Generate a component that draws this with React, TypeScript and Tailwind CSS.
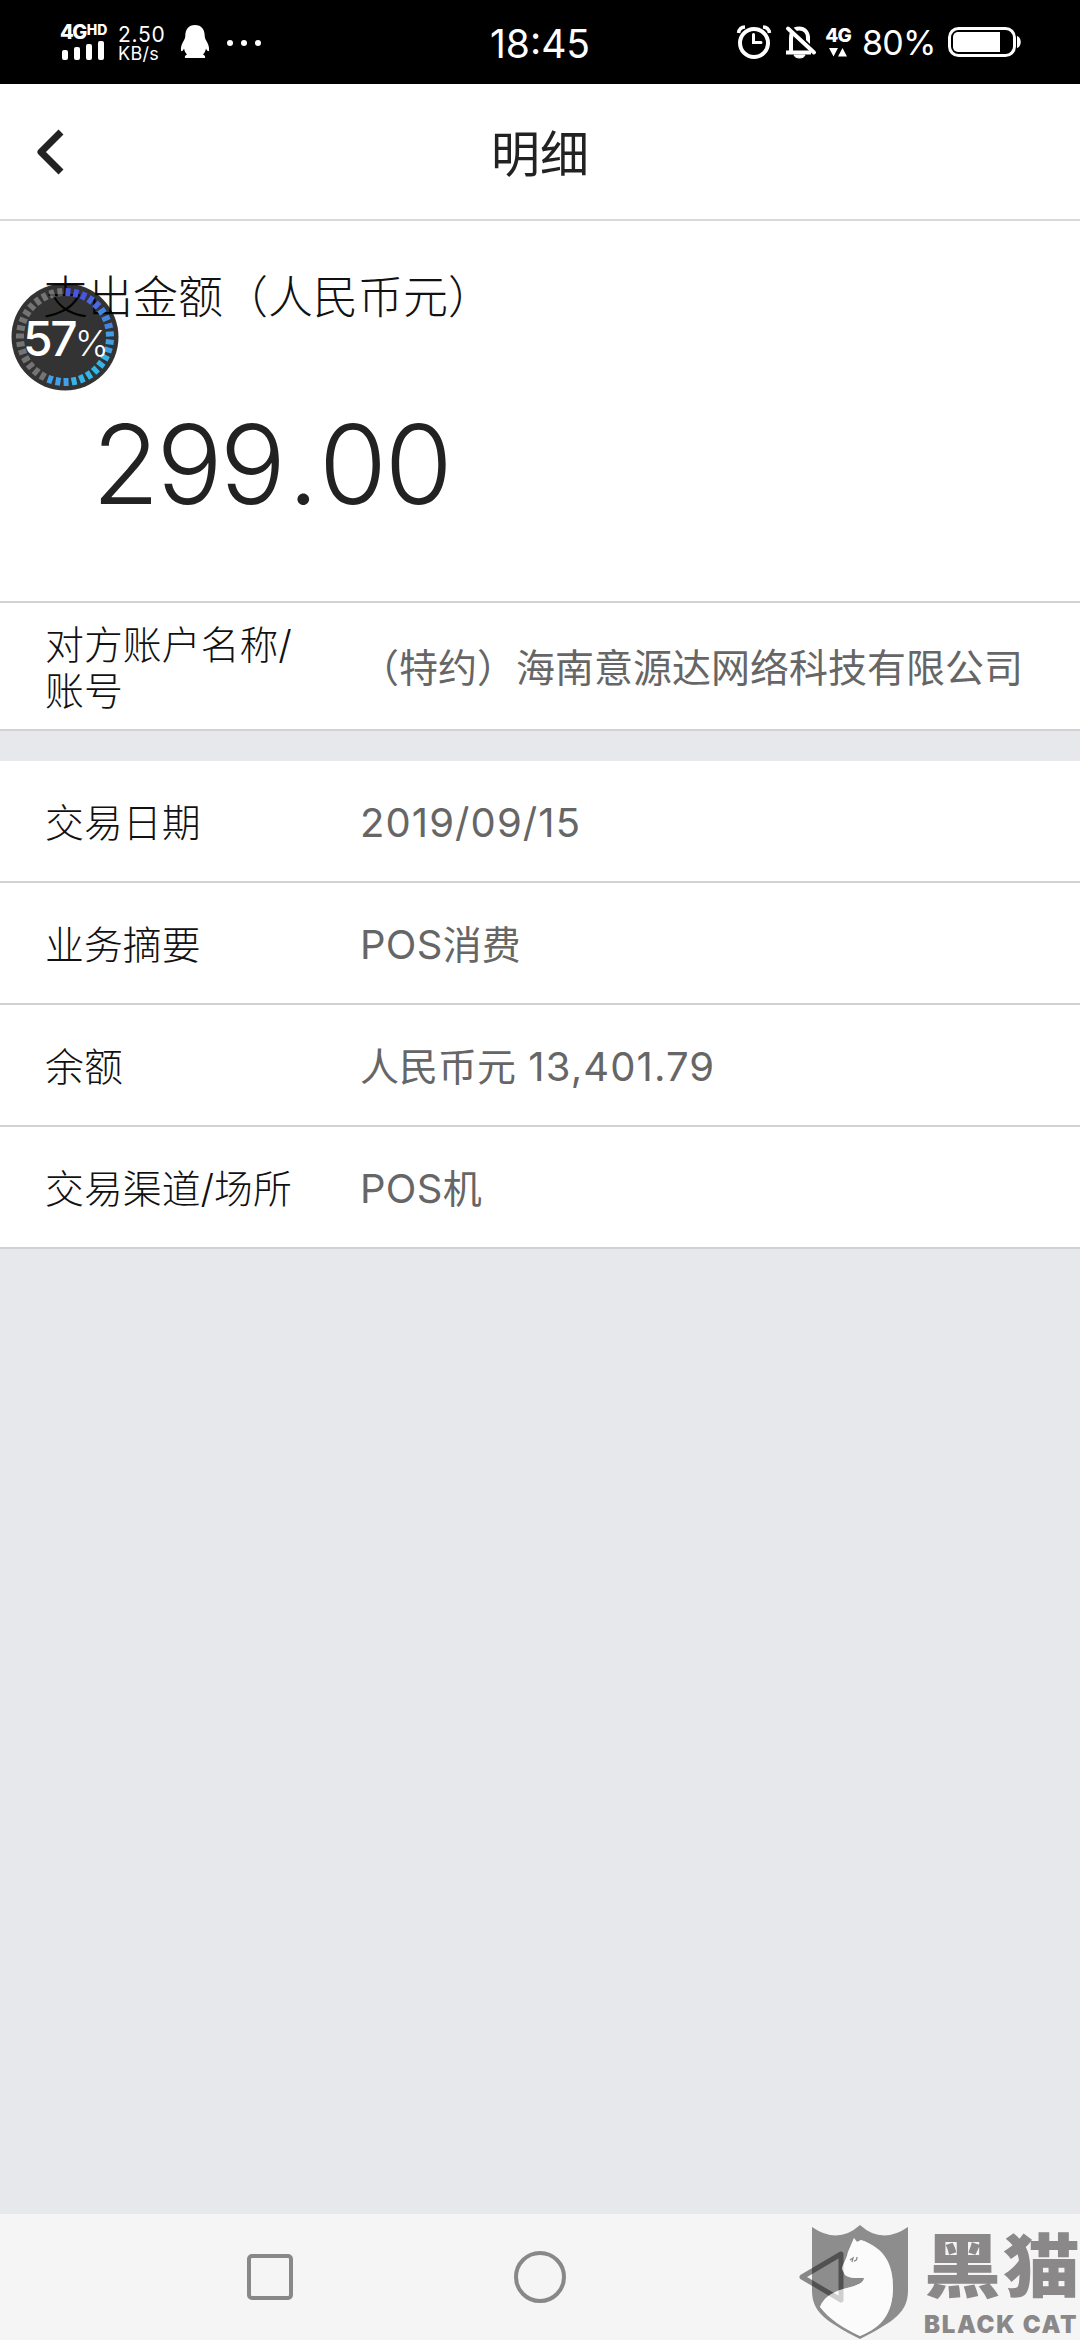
import React from 'react';
import { clsx } from 'clsx';

interface DetailRow {
  label: string;
  value: string;
}

const ROWS: DetailRow[] = [
  { label: '交易日期', value: '2019/09/15' },
  { label: '业务摘要', value: 'POS消费' },
  { label: '余额', value: '人民币元 13,401.79' },
  { label: '交易渠道/场所', value: 'POS机' },
];

const TICK_COUNT = 35;
const PERCENT = 57;
const ACTIVE_TICKS = Math.round((TICK_COUNT * PERCENT) / 100);

const tickColor = (i: number) => {
  if (i >= ACTIVE_TICKS) return 'rgba(255,255,255,0.32)';
  if (i < 3) return '#4a55e0';
  if (i < 5) return '#4a68e6';
  if (i < 8) return '#4385e0';
  if (i < 11) return '#3f9fe6';
  if (i < 17) return '#35b4ea';
  return '#429fe8';
};

const StatusBar: React.FC = () => (
  <header className="relative flex h-[84px] items-center bg-black pl-[60px] pr-[58px] text-white">
    {/* Signal */}
    <div className="flex w-[46px] flex-col">
      <div className="flex h-[16px] items-start leading-none">
        <span className="text-[20px] font-extrabold leading-[16px] tracking-[-1.5px]">4G</span>
        <span className="ml-[1px] text-[14px] font-extrabold leading-[11px]">HD</span>
      </div>
      <div className="flex h-[20px] items-end gap-[6px] pl-[2px]">
        <div className="h-[10px] w-[6px] rounded-[2px] bg-white" />
        <div className="h-[13px] w-[6px] rounded-[2px] bg-white" />
        <div className="h-[16px] w-[6px] rounded-[2px] bg-white" />
        <div className="h-[19px] w-[6px] rounded-[2px] bg-white" />
      </div>
    </div>
    <div className="ml-[12px] mt-[3px] w-[50px] whitespace-nowrap">
      <div className="text-[21px] leading-[19px] tracking-[0.7px]">2.50</div>
      <div className="text-[18px] leading-[19px] tracking-[0.3px]">KB/s</div>
    </div>
    {/* Penguin */}
    <svg className="ml-[12px] h-[34px] w-[30px]" viewBox="0 0 30 34" fill="white">
      <path d="M15 0C8.500 0 5.500 4.500 5.300 10.500C5.300 13 4.500 14.500 3 17C1.300 20 .6 23 1 25.500C1.300 27 3 26 4 23.500C4.500 26 5.500 28 7 29.500C5 30.300 4.600 31.300 5 33H25C25.400 31.300 25 30.300 23 29.500C24.500 28 25.500 26 26 23.500C27 26 28.700 27 29 25.500C29.400 23 28.700 20 27 17C25.500 14.500 24.700 13 24.700 10.500C24.500 4.500 21.500 0 15 0Z" />
    </svg>
    <div className="ml-[17px] mt-[2px] flex gap-[8px]">
      <div className="h-[6px] w-[6px] rounded-full bg-white" />
      <div className="h-[6px] w-[6px] rounded-full bg-white" />
      <div className="h-[6px] w-[6px] rounded-full bg-white" />
    </div>
    <div className="absolute inset-x-0 top-[23px] text-center text-[39px] leading-[42px]">18:45</div>

    <div className="ml-auto flex items-center">
      {/* Alarm */}
      <svg className="h-[36px] w-[36px]" viewBox="0 0 36 36" fill="none" stroke="white">
        <circle cx="18" cy="19" r="14" strokeWidth="4" />
        <path d="M17.500 10.500V18.500H25" strokeWidth="3" strokeLinecap="round" />
        <path d="M2.500 9C3 5.500 5.500 3.200 9 3M27 3C30.500 3.200 33 5.500 33.500 9" strokeWidth="3.500" />
      </svg>
      {/* Muted bell */}
      <svg className="ml-[12px] h-[36px] w-[34px]" viewBox="0 0 34 36" fill="none" stroke="white">
        <path d="M2 28.500H27M7 28V15C7 7.500 10.500 4.500 15 4.500C20.500 4.500 24 8.500 24 14V22" strokeWidth="4" />
        <path d="M10 31C11 35 20 35 21 31Z" fill="white" strokeWidth="1" />
        <path d="M6 3L32 29" stroke="black" strokeWidth="4" />
        <path d="M4 4.500L30 28.500" strokeWidth="4" strokeLinecap="round" />
      </svg>
      <div className="ml-[6px] flex w-[28px] flex-col items-center">
        <span className="text-[19px] font-extrabold leading-[18px] tracking-[-1px]">4G</span>
        <svg className="mt-[2px] h-[10px] w-[18px]" viewBox="0 0 18 10" fill="white">
          <path d="M0 1H9L4.500 9.500ZM9 9.500H18L13.500 1Z" />
        </svg>
      </div>
      <span className="ml-[10px] mt-[2px] w-[74px] whitespace-nowrap text-[34px] font-normal leading-[42px] tracking-[-0.8px]">80%</span>
      <svg className="ml-[12px] h-[32px] w-[74px]" viewBox="0 0 74 32">
        <rect x="1.500" y="2.500" width="65" height="27" rx="9" fill="none" stroke="white" strokeWidth="3" />
        <rect x="5" y="6" width="47" height="20" rx="5" fill="white" />
        <rect x="46" y="6" width="6" height="20" fill="white" />
        <path d="M69 10C74 11 74 21 69 22Z" fill="white" />
      </svg>
    </div>
  </header>
);

const FloatingPercent: React.FC = () => (
  <div className="absolute left-[11px] top-[283px] h-[108px] w-[108px]">
    <svg className="absolute inset-0 h-full w-full" viewBox="0 0 108 108">
      <circle cx="54" cy="54" r="53.500" fill="rgba(0,0,0,0.8)" />
      {Array.from({ length: TICK_COUNT }, (_, i) => (
        <rect
          key={i}
          x="51.500"
          y="5"
          width="5"
          height="8"
          fill={tickColor(i)}
          transform={`rotate(${3.8 + (i * 360) / TICK_COUNT} 54 54)`}
        />
      ))}
    </svg>
    <div className="absolute left-[12px] top-[27px] flex items-baseline whitespace-nowrap leading-[58px] text-white">
      <span className="text-[48px] font-medium tracking-[-2.500px]">57</span>
      <span className="text-[36px] font-light">%</span>
    </div>
  </div>
);

// Latin runs are set slightly looser than the Chinese text around them
const MixedText: React.FC<{ text: string }> = ({ text }) => (
  <>
    {text.split(/([\x20-\x7e]+)/).map((part, i) =>
      i % 2 === 1 ? (
        <span key={i} className={/\d/.test(part) ? 'text-[40px] tracking-[1.1px]' : 'text-[40px] tracking-[0.3px]'}>
          {part}
        </span>
      ) : (
        part
      )
    )}
  </>
);

const Row: React.FC<DetailRow & { tall?: boolean }> = ({ label, value, tall }) => (
  <div className={clsx('flex items-center border-b-2 border-[#d2d2d4] bg-white pl-[45px] pt-[4px]', tall ? 'h-[128px]' : 'h-[122px]')}>
    <div className="w-[315px] shrink-0 whitespace-pre-line text-[38.900px] font-light leading-[46.500px] text-[#111]">{label}</div>
    <div className="whitespace-nowrap text-[39px] leading-[46px] text-[#666]">
      <MixedText text={value} />
    </div>
  </div>
);

const Watermark: React.FC = () => (
  <div className="absolute bottom-0 right-0 flex h-[120px] w-[269px] text-[#8a8888]">
    <svg className="h-[120px] w-[98px] shrink-0" viewBox="0 0 98 120">
      <path
        d="M1 7Q27 25 49 5Q71 25 97 7V70C97 92 84 101 49 119C14 101 1 92 1 70ZM43 18L37 32C35 41 31 45 31 49L34 55C39 59 46 58 53 58C53 63 45 66 32 69C19 73 12 79 9 87C18 99 32 108 49 116C72 107 82 92 82 67C82 45 74 28 50 20L46 22Z"
        fill="#111"
        fillOpacity="0.46"
        fillRule="evenodd"
      />
      <path
        d="M43 18L37 32C35 41 31 45 31 49L34 55C39 59 46 58 53 58C53 63 45 66 32 69C19 73 12 79 9 87C18 99 32 108 49 116C72 107 82 92 82 67C82 45 74 28 50 20L46 22Z"
        fill="white"
        fillOpacity="0.6"
      />
      <path d="M39 40L42 38L41 42M43 41Q46 41 46 37" stroke="#8a8888" strokeWidth="1.300" fill="none" />
    </svg>
    <div className="ml-[15px] flex flex-col whitespace-nowrap">
      <div className="mt-[13px] h-[74px] origin-top scale-y-90 text-[77px] font-black leading-[76px] tracking-[2px]">黑猫</div>
      <div className="mt-[4px] text-[24px] font-black leading-[28px] tracking-[1.7px]">BLACK CAT</div>
    </div>
  </div>
);

const App: React.FC = () => {
  return (
    <div className="relative flex h-[2340px] w-[1080px] flex-col overflow-hidden bg-[#e7e8ec] font-['Inter','Noto_Sans_CJK_SC',sans-serif]">
      <StatusBar />

      <div className="relative flex h-[137px] items-center justify-center border-b-2 border-[#d8d8d8] bg-white">
        <svg className="absolute left-[35px] top-[43px] h-[50px] w-[32px]" viewBox="0 0 32 50" fill="none">
          <path d="M26 5L6 25L26 45" stroke="#222" strokeWidth="7" strokeLinejoin="round" />
        </svg>
        <h1 className="mt-[6px] text-[49px] leading-[60px] text-[#222]">明细</h1>
      </div>

      <section className="flex h-[382px] flex-col border-b-2 border-[#d2d2d4] bg-white text-[#222]">
        <div className="ml-[43px] mt-[47px] text-[45px] font-light leading-[60px] text-[#111]">支出金额（人民币元）</div>
        <div className="ml-[92px] mt-[70px] text-[110px] font-light leading-[132px]">
          <span className="tracking-[-3px]">299</span>
          <span className="ml-[5px]">.</span>
          <span className="tracking-[-2px]">00</span>
        </div>
      </section>

      <Row label={'对方账户名称/\n账号'} value="（特约）海南意源达网络科技有限公司" tall />

      <div className="mt-[30px]">
        {ROWS.map((row) => (
          <Row key={row.label} {...row} />
        ))}
      </div>

      {/* System navigation */}
      <nav className="mt-auto flex h-[126px] items-center bg-[#f5f5f5] pl-[247px]">
        <div className="h-[46px] w-[46px] rounded-[5px] border-4 border-[#888]" />
        <div className="ml-[221px] h-[52px] w-[52px] rounded-full border-4 border-[#888]" />
        <svg className="ml-[233px] h-[52px] w-[46px]" viewBox="0 0 46 52" fill="none">
          <path d="M3 26L42 3V49Z" stroke="#888" strokeWidth="5" strokeLinejoin="round" />
        </svg>
      </nav>

      <FloatingPercent />
      <Watermark />
    </div>
  );
};

export default App;
